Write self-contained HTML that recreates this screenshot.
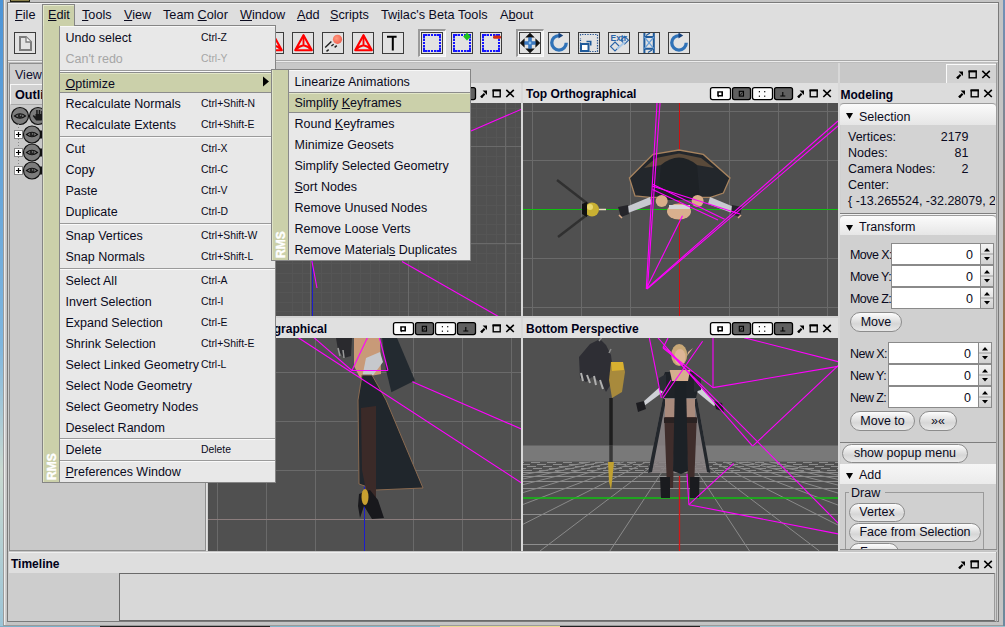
<!DOCTYPE html><html><head><meta charset="utf-8"><style>

*{box-sizing:border-box;margin:0;padding:0}
html,body{width:1005px;height:627px;overflow:hidden}
body{position:relative;font-family:"Liberation Sans",sans-serif;font-size:12.5px;color:#000;background:#6a9cc8}
.ab{position:absolute}
.t{position:absolute;white-space:nowrap;line-height:1}
u{text-decoration:underline;text-decoration-thickness:1px;text-underline-offset:1px}

</style></head><body>
<div class="ab" style="left:0px;top:0px;width:3px;height:627px;background:linear-gradient(#4d94d6,#7fb6de 55%,#c9d9d0 75%,#9cc4d6)"></div>
<div class="ab" style="left:1003px;top:0px;width:2px;height:627px;background:linear-gradient(#7090b8,#a07040 60%,#6a8aa0)"></div>
<div class="ab" style="left:0px;top:626px;width:1005px;height:1px;background:linear-gradient(90deg,#7ab0c8 0 100px,#222 100px 270px,#80b4c8 270px 440px,#e8d890 440px 560px,#222 560px 700px,#9cc0cc 700px 1005px)"></div>
<div class="ab" style="left:3px;top:0px;width:1000px;height:626px;background:#c4c4c4"></div>
<div class="ab" style="left:3px;top:0px;width:1px;height:626px;background:#9c9c9c"></div>
<div class="ab" style="left:4px;top:0px;width:1px;height:625px;background:#ececec"></div>
<div class="ab" style="left:5px;top:0px;width:1px;height:625px;background:#cfcfcf"></div>
<div class="ab" style="left:10px;top:0px;width:20px;height:2px;background:#8a804a;border:1px solid #1e1e10;border-top:none"></div>
<div class="ab" style="left:3px;top:625px;width:1000px;height:1px;background:#9a9a9a"></div>
<div class="ab" style="left:7px;top:2px;width:992px;height:620px;background:#cdcdcd;border:1px solid #7a7a7a"></div>
<div class="ab" style="left:8px;top:3px;width:990px;height:57px;background:#dedede"></div>
<div class="ab" style="left:8px;top:3px;width:990px;height:1px;background:#f2f2f2"></div>
<div class="ab" style="left:8px;top:60px;width:990px;height:1px;background:#a8a8a8"></div>
<div class="ab" style="left:8px;top:61px;width:990px;height:1px;background:#ececec"></div>
<div class="ab" style="left:8px;top:62px;width:990px;height:1px;background:#bdbdbd"></div>
<div class="ab" style="left:42px;top:4px;width:33px;height:22px;background:#cbd0aa;border:1px solid #858585;border-bottom:none"></div>
<div class="ab" style="left:43px;top:5px;width:31px;height:1px;background:#e4e8cc"></div>
<div class="ab" style="left:43px;top:5px;width:1px;height:21px;background:#e4e8cc"></div>
<div class="t" style="left:15px;top:9.02px;font-size:12.7px;color:#0a0a1e;"><u>F</u>ile</div>
<div class="t" style="left:48px;top:9.02px;font-size:12.7px;color:#0a0a1e;"><u>E</u>dit</div>
<div class="t" style="left:82px;top:9.02px;font-size:12.7px;color:#0a0a1e;"><u>T</u>ools</div>
<div class="t" style="left:124px;top:9.02px;font-size:12.7px;color:#0a0a1e;"><u>V</u>iew</div>
<div class="t" style="left:163px;top:9.02px;font-size:12.7px;color:#0a0a1e;">Team <u>C</u>olor</div>
<div class="t" style="left:240px;top:9.02px;font-size:12.7px;color:#0a0a1e;"><u>W</u>indow</div>
<div class="t" style="left:297px;top:9.02px;font-size:12.7px;color:#0a0a1e;"><u>A</u>dd</div>
<div class="t" style="left:330px;top:9.02px;font-size:12.7px;color:#0a0a1e;"><u>S</u>cripts</div>
<div class="t" style="left:381px;top:9.02px;font-size:12.7px;color:#0a0a1e;">Tw<u>i</u>lac's Beta Tools</div>
<div class="t" style="left:500px;top:9.02px;font-size:12.7px;color:#0a0a1e;">A<u>b</u>out</div>
<div class="ab" style="left:14px;top:32px;width:22px;height:22px;border:1px solid #3c3c3c;background:#e2e2e2"></div>
<svg class="ab" style="left:14px;top:32px" width="22" height="22" viewBox="0 0 22 22"><path d="M6 5H12L17 10V18H6Z" fill="none" stroke="#7c7c7c" stroke-width="2"/><path d="M12 5V10H17" fill="#f4f4f4" stroke="#7c7c7c" stroke-width="1.3"/></svg>
<div class="ab" style="left:262px;top:32px;width:22px;height:22px;border:1px solid #3c3c3c;background:#e2e2e2"></div>
<svg class="ab" style="left:262px;top:32px" width="22" height="22" viewBox="0 0 22 22"><path d="M11.5 3.2L3.2 18.2H19.8Z" fill="none" stroke="#f00" stroke-width="2.1" stroke-linejoin="round"/><path d="M11.5 3.5V13.2M3.8 17.6Q7 14 11.5 13.2Q16 14 19.2 17.6" fill="none" stroke="#f00" stroke-width="1.9"/></svg>
<div class="ab" style="left:292px;top:32px;width:22px;height:22px;border:1px solid #3c3c3c;background:#e2e2e2"></div>
<svg class="ab" style="left:292px;top:32px" width="22" height="22" viewBox="0 0 22 22"><path d="M11.5 3.2L3.2 18.2H19.8Z" fill="none" stroke="#f00" stroke-width="2.1" stroke-linejoin="round"/><path d="M11.5 3.5V13.2M3.8 17.6Q7 14 11.5 13.2Q16 14 19.2 17.6" fill="none" stroke="#f00" stroke-width="1.9"/></svg>
<div class="ab" style="left:322px;top:32px;width:22px;height:22px;border:1px solid #3c3c3c;background:#e2e2e2"></div>
<svg class="ab" style="left:322px;top:32px" width="22" height="22" viewBox="0 0 22 22"><defs><radialGradient id="cg" cx="0.4" cy="0.4" r="0.7"><stop offset="0" stop-color="#ff9a80"/><stop offset="1" stop-color="#f05a4a"/></radialGradient></defs><circle cx="15.5" cy="7.3" r="4.6" fill="url(#cg)"/><path d="M3.2 15.4L9.4 9.5M9.4 14L11.7 12.2M12.6 15.4L14.8 13.6M4.5 19.4L6.7 17.6" stroke="#1e1e1e" stroke-width="1.4"/></svg>
<div class="ab" style="left:352px;top:32px;width:22px;height:22px;border:1px solid #3c3c3c;background:#e2e2e2"></div>
<svg class="ab" style="left:352px;top:32px" width="22" height="22" viewBox="0 0 22 22"><path d="M11.5 3.2L3.2 18.2H19.8Z" fill="none" stroke="#f00" stroke-width="2.1" stroke-linejoin="round"/><path d="M11.5 3.5V13.2M3.8 17.6Q7 14 11.5 13.2Q16 14 19.2 17.6" fill="none" stroke="#f00" stroke-width="1.9"/></svg>
<div class="ab" style="left:382px;top:32px;width:22px;height:22px;border:1px solid #3c3c3c;background:#e2e2e2"></div>
<svg class="ab" style="left:382px;top:32px" width="22" height="22" viewBox="0 0 22 22"><path d="M5 4.8H14.6M10.8 4.8V18.6" stroke="#000" stroke-width="2"/></svg>
<div class="ab" style="left:418px;top:29px;width:28px;height:28px;border-top:2px solid #9a9a9a;border-left:2px solid #9a9a9a;border-right:1px solid #fafafa;border-bottom:1px solid #fafafa;background:#f2f2f2"></div>
<div class="ab" style="left:421px;top:32px;width:22px;height:22px;border:1px solid #3c3c3c;background:#e2e2e2"></div>
<svg class="ab" style="left:421px;top:32px" width="22" height="22" viewBox="0 0 22 22"><path d="M3 6.5V3H6.5M15.5 3H19V6.5M19 15.5V19H15.5M6.5 19H3V15.5" fill="none" stroke="#1414ff" stroke-width="2"/><rect x="7" y="2" width="2" height="2" fill="#1414ff"/><rect x="7" y="18" width="2" height="2" fill="#1414ff"/><rect x="2" y="7" width="2" height="2" fill="#1414ff"/><rect x="18" y="7" width="2" height="2" fill="#1414ff"/><rect x="10" y="2" width="2" height="2" fill="#1414ff"/><rect x="10" y="18" width="2" height="2" fill="#1414ff"/><rect x="2" y="10" width="2" height="2" fill="#1414ff"/><rect x="18" y="10" width="2" height="2" fill="#1414ff"/><rect x="13" y="2" width="2" height="2" fill="#1414ff"/><rect x="13" y="18" width="2" height="2" fill="#1414ff"/><rect x="2" y="13" width="2" height="2" fill="#1414ff"/><rect x="18" y="13" width="2" height="2" fill="#1414ff"/></svg>
<div class="ab" style="left:451px;top:32px;width:22px;height:22px;border:1px solid #3c3c3c;background:#e2e2e2"></div>
<svg class="ab" style="left:451px;top:32px" width="22" height="22" viewBox="0 0 22 22"><path d="M3 6.5V3H6.5M15.5 3H19V6.5M19 15.5V19H15.5M6.5 19H3V15.5" fill="none" stroke="#1414ff" stroke-width="2"/><rect x="7" y="2" width="2" height="2" fill="#1414ff"/><rect x="7" y="18" width="2" height="2" fill="#1414ff"/><rect x="2" y="7" width="2" height="2" fill="#1414ff"/><rect x="18" y="7" width="2" height="2" fill="#1414ff"/><rect x="10" y="2" width="2" height="2" fill="#1414ff"/><rect x="10" y="18" width="2" height="2" fill="#1414ff"/><rect x="2" y="10" width="2" height="2" fill="#1414ff"/><rect x="18" y="10" width="2" height="2" fill="#1414ff"/><rect x="13" y="2" width="2" height="2" fill="#1414ff"/><rect x="13" y="18" width="2" height="2" fill="#1414ff"/><rect x="2" y="13" width="2" height="2" fill="#1414ff"/><rect x="18" y="13" width="2" height="2" fill="#1414ff"/><path d="M16 0.8L19.8 4.6L16 8.4L12.2 4.6Z" fill="#1bc41b"/></svg>
<div class="ab" style="left:480px;top:32px;width:22px;height:22px;border:1px solid #3c3c3c;background:#e2e2e2"></div>
<svg class="ab" style="left:480px;top:32px" width="22" height="22" viewBox="0 0 22 22"><path d="M3 6.5V3H6.5M15.5 3H19V6.5M19 15.5V19H15.5M6.5 19H3V15.5" fill="none" stroke="#1414ff" stroke-width="2"/><rect x="7" y="2" width="2" height="2" fill="#1414ff"/><rect x="7" y="18" width="2" height="2" fill="#1414ff"/><rect x="2" y="7" width="2" height="2" fill="#1414ff"/><rect x="18" y="7" width="2" height="2" fill="#1414ff"/><rect x="10" y="2" width="2" height="2" fill="#1414ff"/><rect x="10" y="18" width="2" height="2" fill="#1414ff"/><rect x="2" y="10" width="2" height="2" fill="#1414ff"/><rect x="18" y="10" width="2" height="2" fill="#1414ff"/><rect x="13" y="2" width="2" height="2" fill="#1414ff"/><rect x="13" y="18" width="2" height="2" fill="#1414ff"/><rect x="2" y="13" width="2" height="2" fill="#1414ff"/><rect x="18" y="13" width="2" height="2" fill="#1414ff"/><rect x="13" y="3.4" width="8" height="3.4" rx="1.5" fill="#d42a10"/></svg>
<div class="ab" style="left:516px;top:29px;width:28px;height:28px;border-top:2px solid #9a9a9a;border-left:2px solid #9a9a9a;border-right:1px solid #fafafa;border-bottom:1px solid #fafafa;background:#f2f2f2"></div>
<div class="ab" style="left:519px;top:32px;width:22px;height:22px;border:1px solid #3c3c3c;background:#e2e2e2"></div>
<svg class="ab" style="left:519px;top:32px" width="22" height="22" viewBox="0 0 22 22"><path d="M11 4V18M4 11H18" stroke="#3a78c0" stroke-width="3.2"/><path d="M11 0.8L15.8 5.6H6.2ZM11 21.2L15.8 16.4H6.2ZM0.8 11L5.6 6.2V15.8ZM21.2 11L16.4 6.2V15.8Z" fill="#111"/><path d="M11 5.6V16.4M5.6 11H16.4" stroke="#3a78c0" stroke-width="3"/><circle cx="11" cy="11" r="1.4" fill="#8cc0ec"/></svg>
<div class="ab" style="left:548px;top:32px;width:22px;height:22px;border:1px solid #3c3c3c;background:#e2e2e2"></div>
<svg class="ab" style="left:548px;top:32px" width="22" height="22" viewBox="0 0 22 22"><path d="M11 3.55A7.25 7.25 0 1 0 18.25 10.8" fill="none" stroke="#2f72b8" stroke-width="3.3"/><path d="M10.5 0.6L15.2 3.6L10.5 6.6Z" fill="#143f7a"/></svg>
<div class="ab" style="left:578px;top:32px;width:22px;height:22px;border:1px solid #3c3c3c;background:#e2e2e2"></div>
<svg class="ab" style="left:578px;top:32px" width="22" height="22" viewBox="0 0 22 22"><path d="M2.5 3.5V2.5H19.5V19.5H2.5V6" fill="none" stroke="#1f4f8f" stroke-width="1.2" stroke-dasharray="1.3 1.3"/><rect x="3" y="12" width="7.5" height="7" fill="#fff" stroke="#1f5a9a" stroke-width="2"/><path d="M8.5 9.5H12.7V13.5" fill="none" stroke="#1f5a9a" stroke-width="1.6"/></svg>
<div class="ab" style="left:608px;top:32px;width:22px;height:22px;border:1px solid #3c3c3c;background:#e2e2e2"></div>
<svg class="ab" style="left:608px;top:32px" width="22" height="22" viewBox="0 0 22 22"><text x="2.5" y="8.8" font-size="8.6" font-family="Liberation Sans" fill="#2a64a8" font-weight="bold" textLength="16.5" lengthAdjust="spacingAndGlyphs">Extr</text><path d="M7 10L11.5 14.5L7 19L2.5 14.5ZM16.7 4.3L20.5 8.2L16.7 12L12.9 8.2Z" fill="none" stroke="#2a64a8" stroke-width="1.1"/><path d="M9 17L17 10" stroke="#a8c8e8" stroke-width="2"/></svg>
<div class="ab" style="left:638px;top:32px;width:22px;height:22px;border:1px solid #3c3c3c;background:#e2e2e2"></div>
<svg class="ab" style="left:638px;top:32px" width="22" height="22" viewBox="0 0 22 22"><path d="M6.4 1V21M15.8 1V21M6.4 5H15.8M6.4 16.7H15.8" fill="none" stroke="#1f5a9a" stroke-width="2"/><path d="M6.4 5L15.8 16.7M15.8 5L6.4 16.7" stroke="#6aa0d8" stroke-width="1.2"/><path d="M8 3.5L12 1M10 20.5L14 18" stroke="#1f5a9a" stroke-width="1.2"/></svg>
<div class="ab" style="left:668px;top:32px;width:22px;height:22px;border:1px solid #3c3c3c;background:#e2e2e2"></div>
<svg class="ab" style="left:668px;top:32px" width="22" height="22" viewBox="0 0 22 22"><path d="M11 3.55A7.25 7.25 0 1 0 18.25 10.8" fill="none" stroke="#2f72b8" stroke-width="3.3"/><path d="M10.5 0.6L15.2 3.6L10.5 6.6Z" fill="#143f7a"/></svg>
<div class="ab" style="left:8px;top:63px;width:990px;height:20px;background:#c8c8c8"></div>
<div class="ab" style="left:9px;top:63px;width:197px;height:488px;background:#c9c9c9;border:1px solid #8e8e8e"></div>
<div class="ab" style="left:10px;top:64px;width:60px;height:20px;background:#cfcfcf;border-right:1px solid #9a9a9a"></div>
<div class="t" style="left:15px;top:68.88px;font-size:12.5px;color:#101030;">View</div>
<div class="ab" style="left:10px;top:84px;width:195px;height:21px;background:#d2d2d2;border-top:1px solid #f6f6f6;border-left:1px solid #f6f6f6;border-bottom:1px solid #a8a8a8"></div>
<div class="t" style="left:15px;top:88.72px;font-size:12.7px;font-weight:bold;color:#000018;">Outliner</div>
<svg class="ab" style="left:0;top:0" width="60" height="200"><circle cx="20" cy="116" r="8.5" fill="#7c7c7c" stroke="#111" stroke-width="1.2"/><path d="M14.5 116q5.5 -4.5 11 0q-5.5 4.5 -11 0z" fill="none" stroke="#111" stroke-width="1.1"/><circle cx="20" cy="116" r="2.3" fill="#222"/><circle cx="20.6" cy="115.4" r="0.8" fill="#777"/><circle cx="38" cy="116" r="8.5" fill="#7c7c7c" stroke="#111" stroke-width="1.2"/><path d="M35.5 111.5v5l-1.8-1.5l-1 1l3.5 4.5h5.5l1-2v-7.5h-1.5v3h-1v-4h-1.5v4h-1v-4h-1.5v4h-0.7v-2.5z" fill="#1a1a1a"/><path d="M18.5 124v46" stroke="#888" stroke-width="1" stroke-dasharray="1 2"/><rect x="14.5" y="130.5" width="8" height="8" fill="#fff" stroke="#888" stroke-width="1"/><path d="M16 134.5h5M18.5 132.0v5" stroke="#000" stroke-width="1.2"/><circle cx="32" cy="134.5" r="8.5" fill="#7c7c7c" stroke="#111" stroke-width="1.2"/><path d="M26.5 134.5q5.5 -4.5 11 0q-5.5 4.5 -11 0z" fill="none" stroke="#111" stroke-width="1.1"/><circle cx="32" cy="134.5" r="2.3" fill="#222"/><circle cx="32.6" cy="133.9" r="0.8" fill="#777"/><rect x="40" y="130.5" width="3" height="8" fill="#111"/><rect x="14.5" y="148.5" width="8" height="8" fill="#fff" stroke="#888" stroke-width="1"/><path d="M16 152.5h5M18.5 150.0v5" stroke="#000" stroke-width="1.2"/><circle cx="32" cy="152.5" r="8.5" fill="#7c7c7c" stroke="#111" stroke-width="1.2"/><path d="M26.5 152.5q5.5 -4.5 11 0q-5.5 4.5 -11 0z" fill="none" stroke="#111" stroke-width="1.1"/><circle cx="32" cy="152.5" r="2.3" fill="#222"/><circle cx="32.6" cy="151.9" r="0.8" fill="#777"/><rect x="40" y="148.5" width="3" height="8" fill="#111"/><rect x="14.5" y="166.5" width="8" height="8" fill="#fff" stroke="#888" stroke-width="1"/><path d="M16 170.5h5M18.5 168.0v5" stroke="#000" stroke-width="1.2"/><circle cx="32" cy="170.5" r="8.5" fill="#7c7c7c" stroke="#111" stroke-width="1.2"/><path d="M26.5 170.5q5.5 -4.5 11 0q-5.5 4.5 -11 0z" fill="none" stroke="#111" stroke-width="1.1"/><circle cx="32" cy="170.5" r="2.3" fill="#222"/><circle cx="32.6" cy="169.9" r="0.8" fill="#777"/><rect x="40" y="166.5" width="3" height="8" fill="#111"/></svg>
<div class="ab" style="left:206px;top:63px;width:1px;height:488px;background:#e2e2e2"></div>
<div class="ab" style="left:207px;top:63px;width:1px;height:488px;background:#d2d2d2"></div>
<div class="ab" style="left:208px;top:103px;width:313px;height:213px;background:#505050"></div>
<div class="ab" style="left:523px;top:103px;width:315px;height:213px;background:#505050"></div>
<div class="ab" style="left:208px;top:338px;width:313px;height:213px;background:#505050"></div>
<div class="ab" style="left:523px;top:338px;width:315px;height:213px;background:#505050"></div>
<svg class="ab" style="left:208px;top:103px" width="313" height="213" viewBox="208 103 313 213"><line x1="292.5" y1="103" x2="292.5" y2="316" stroke="#555555" stroke-width="1"/><line x1="302.5" y1="103" x2="302.5" y2="316" stroke="#555555" stroke-width="1"/><line x1="312.5" y1="103" x2="312.5" y2="316" stroke="#555555" stroke-width="1"/><line x1="321.5" y1="103" x2="321.5" y2="316" stroke="#555555" stroke-width="1"/><line x1="331.5" y1="103" x2="331.5" y2="316" stroke="#555555" stroke-width="1"/><line x1="341.5" y1="103" x2="341.5" y2="316" stroke="#555555" stroke-width="1"/><line x1="350.5" y1="103" x2="350.5" y2="316" stroke="#555555" stroke-width="1"/><line x1="360.5" y1="103" x2="360.5" y2="316" stroke="#555555" stroke-width="1"/><line x1="370.5" y1="103" x2="370.5" y2="316" stroke="#555555" stroke-width="1"/><line x1="379.5" y1="103" x2="379.5" y2="316" stroke="#555555" stroke-width="1"/><line x1="389.5" y1="103" x2="389.5" y2="316" stroke="#555555" stroke-width="1"/><line x1="399.5" y1="103" x2="399.5" y2="316" stroke="#555555" stroke-width="1"/><line x1="408.5" y1="103" x2="408.5" y2="316" stroke="#555555" stroke-width="1"/><line x1="418.5" y1="103" x2="418.5" y2="316" stroke="#555555" stroke-width="1"/><line x1="428.5" y1="103" x2="428.5" y2="316" stroke="#555555" stroke-width="1"/><line x1="438.5" y1="103" x2="438.5" y2="316" stroke="#555555" stroke-width="1"/><line x1="447.5" y1="103" x2="447.5" y2="316" stroke="#555555" stroke-width="1"/><line x1="457.5" y1="103" x2="457.5" y2="316" stroke="#555555" stroke-width="1"/><line x1="467.5" y1="103" x2="467.5" y2="316" stroke="#555555" stroke-width="1"/><line x1="476.5" y1="103" x2="476.5" y2="316" stroke="#555555" stroke-width="1"/><line x1="486.5" y1="103" x2="486.5" y2="316" stroke="#555555" stroke-width="1"/><line x1="496.5" y1="103" x2="496.5" y2="316" stroke="#555555" stroke-width="1"/><line x1="506.5" y1="103" x2="506.5" y2="316" stroke="#555555" stroke-width="1"/><line x1="515.5" y1="103" x2="515.5" y2="316" stroke="#555555" stroke-width="1"/><line x1="208" y1="108.5" x2="521" y2="108.5" stroke="#555555" stroke-width="1"/><line x1="208" y1="117.5" x2="521" y2="117.5" stroke="#555555" stroke-width="1"/><line x1="208" y1="127.5" x2="521" y2="127.5" stroke="#555555" stroke-width="1"/><line x1="208" y1="137.5" x2="521" y2="137.5" stroke="#555555" stroke-width="1"/><line x1="208" y1="146.5" x2="521" y2="146.5" stroke="#555555" stroke-width="1"/><line x1="208" y1="156.5" x2="521" y2="156.5" stroke="#555555" stroke-width="1"/><line x1="208" y1="166.5" x2="521" y2="166.5" stroke="#555555" stroke-width="1"/><line x1="208" y1="176.5" x2="521" y2="176.5" stroke="#555555" stroke-width="1"/><line x1="208" y1="185.5" x2="521" y2="185.5" stroke="#555555" stroke-width="1"/><line x1="208" y1="195.5" x2="521" y2="195.5" stroke="#555555" stroke-width="1"/><line x1="208" y1="205.5" x2="521" y2="205.5" stroke="#555555" stroke-width="1"/><line x1="208" y1="214.5" x2="521" y2="214.5" stroke="#555555" stroke-width="1"/><line x1="208" y1="224.5" x2="521" y2="224.5" stroke="#555555" stroke-width="1"/><line x1="208" y1="234.5" x2="521" y2="234.5" stroke="#555555" stroke-width="1"/><line x1="208" y1="244.5" x2="521" y2="244.5" stroke="#555555" stroke-width="1"/><line x1="208" y1="253.5" x2="521" y2="253.5" stroke="#555555" stroke-width="1"/><line x1="208" y1="263.5" x2="521" y2="263.5" stroke="#555555" stroke-width="1"/><line x1="208" y1="273.5" x2="521" y2="273.5" stroke="#555555" stroke-width="1"/><line x1="208" y1="282.5" x2="521" y2="282.5" stroke="#555555" stroke-width="1"/><line x1="208" y1="292.5" x2="521" y2="292.5" stroke="#555555" stroke-width="1"/><line x1="208" y1="302.5" x2="521" y2="302.5" stroke="#555555" stroke-width="1"/><line x1="208" y1="311.5" x2="521" y2="311.5" stroke="#555555" stroke-width="1"/><line x1="213.5" y1="103" x2="213.5" y2="316" stroke="#6a6a6a" stroke-width="1"/><line x1="310.5" y1="103" x2="310.5" y2="316" stroke="#6a6a6a" stroke-width="1"/><line x1="408.5" y1="103" x2="408.5" y2="316" stroke="#6a6a6a" stroke-width="1"/><line x1="505.5" y1="103" x2="505.5" y2="316" stroke="#6a6a6a" stroke-width="1"/><line x1="208" y1="146.5" x2="521" y2="146.5" stroke="#6a6a6a" stroke-width="1"/><line x1="208" y1="243.5" x2="521" y2="243.5" stroke="#6a6a6a" stroke-width="1"/><line x1="312.5" y1="103" x2="312.5" y2="316" stroke="#1c1ccc" stroke-width="1"/><line x1="471" y1="131" x2="521" y2="109.4" stroke="#ff00ff" stroke-width="1.1"/><line x1="402" y1="261.4" x2="498.4" y2="316.5" stroke="#ff00ff" stroke-width="1.1"/><line x1="311.9" y1="261" x2="317" y2="288" stroke="#ff00ff" stroke-width="1.1"/></svg>
<svg class="ab" style="left:523px;top:103px" width="315" height="213" viewBox="523 103 315 213"><line x1="532.5" y1="103" x2="532.5" y2="316" stroke="#6a6a6a" stroke-width="1"/><line x1="581.5" y1="103" x2="581.5" y2="316" stroke="#6a6a6a" stroke-width="1"/><line x1="630.5" y1="103" x2="630.5" y2="316" stroke="#6a6a6a" stroke-width="1"/><line x1="729.5" y1="103" x2="729.5" y2="316" stroke="#6a6a6a" stroke-width="1"/><line x1="778.5" y1="103" x2="778.5" y2="316" stroke="#6a6a6a" stroke-width="1"/><line x1="827.5" y1="103" x2="827.5" y2="316" stroke="#6a6a6a" stroke-width="1"/><line x1="523" y1="111.5" x2="838" y2="111.5" stroke="#6a6a6a" stroke-width="1"/><line x1="523" y1="160.5" x2="838" y2="160.5" stroke="#6a6a6a" stroke-width="1"/><line x1="523" y1="258.5" x2="838" y2="258.5" stroke="#6a6a6a" stroke-width="1"/><line x1="523" y1="307.5" x2="838" y2="307.5" stroke="#6a6a6a" stroke-width="1"/><line x1="679.5" y1="103" x2="679.5" y2="316" stroke="#cc1010" stroke-width="1"/><line x1="523" y1="209.5" x2="838" y2="209.5" stroke="#10c010" stroke-width="1"/><path d="M653 154.4 L679 150 L703.3 154.4 L730 178 L723.4 193 L710.5 197.4 L650 197.4 L635 196 L629.4 178 Z" fill="#23272c" stroke="#a8845f" stroke-width="1.3"/><path d="M656 158 L679 153.5 L701 158 L714 168 L679 162 L644 168 Z" fill="#5a4a3a"/><path d="M661 165 Q679 150 697 165 L700 200 L658 200 Z" fill="#1e2226"/><path d="M650 197 L626 207 L628 213 L652 204 Z" fill="#c8cad0"/><path d="M710 197 L734 207 L732 213 L708 204 Z" fill="#c8cad0"/><path d="M618 207 L628 205 L629 214 L621 217 Z M732 205 L742 207 L740 217 L731 214 Z" fill="#25252a"/><path d="M619 215 L622 218 M741 215 L738 218" stroke="#d7aa88" stroke-width="1.5"/><ellipse cx="661.7" cy="201" rx="6" ry="6" fill="#d8ae8a"/><ellipse cx="697.6" cy="201" rx="6" ry="6" fill="#d8ae8a"/><ellipse cx="679" cy="211.5" rx="12" ry="8" fill="#d9b08e"/><path d="M669 207 L690 207" stroke="#d6d6d6" stroke-width="4"/><line x1="557" y1="180" x2="588" y2="204" stroke="#303030" stroke-width="2.5"/><line x1="558" y1="237" x2="588" y2="214" stroke="#303030" stroke-width="2.5"/><circle cx="592" cy="209.5" r="7" fill="#c8b032"/><circle cx="590" cy="207" r="3" fill="#e8d870"/><path d="M582 204 L587 202 L587 217 L582 214 Z" fill="#111"/><line x1="599" y1="209.5" x2="606" y2="209.5" stroke="#e8e0c0" stroke-width="1.5"/><line x1="657" y1="103" x2="646.3" y2="288.8" stroke="#ff00ff" stroke-width="1.1"/><line x1="660" y1="103" x2="647.5" y2="288" stroke="#ff00ff" stroke-width="1.1"/><line x1="646.3" y1="288.8" x2="838" y2="121" stroke="#ff00ff" stroke-width="1.1"/><line x1="647" y1="289" x2="838" y2="126" stroke="#ff00ff" stroke-width="1.1"/><line x1="646.3" y1="288.8" x2="682.5" y2="215.8" stroke="#ff00ff" stroke-width="1.1"/><line x1="652.6" y1="184.2" x2="724.6" y2="219.3" stroke="#ff00ff" stroke-width="1.1"/><line x1="652.6" y1="189.5" x2="718" y2="220" stroke="#ff00ff" stroke-width="1.1"/><line x1="652" y1="186" x2="740" y2="214" stroke="#ff00ff" stroke-width="1.1"/></svg>
<svg class="ab" style="left:208px;top:338px" width="313" height="213" viewBox="208 338 313 213"><line x1="217.5" y1="338" x2="217.5" y2="551" stroke="#6a6a6a" stroke-width="1"/><line x1="266.5" y1="338" x2="266.5" y2="551" stroke="#6a6a6a" stroke-width="1"/><line x1="315.5" y1="338" x2="315.5" y2="551" stroke="#6a6a6a" stroke-width="1"/><line x1="413.5" y1="338" x2="413.5" y2="551" stroke="#6a6a6a" stroke-width="1"/><line x1="462.5" y1="338" x2="462.5" y2="551" stroke="#6a6a6a" stroke-width="1"/><line x1="511.5" y1="338" x2="511.5" y2="551" stroke="#6a6a6a" stroke-width="1"/><line x1="208" y1="372.5" x2="521" y2="372.5" stroke="#6a6a6a" stroke-width="1"/><line x1="208" y1="421.5" x2="521" y2="421.5" stroke="#6a6a6a" stroke-width="1"/><line x1="208" y1="470.5" x2="521" y2="470.5" stroke="#6a6a6a" stroke-width="1"/><line x1="208" y1="519.5" x2="521" y2="519.5" stroke="#8a7c7c" stroke-width="1"/><line x1="364.5" y1="338" x2="364.5" y2="551" stroke="#1c1ccc" stroke-width="1"/><path d="M336 338 L352 338 L351 356 L344 358 L338 350 Z" fill="#2a2a2e"/><path d="M338 348 L340 356 M343 350 L344 358" stroke="#9a9a9a" stroke-width="1.5"/><path d="M382 337 L396.6 337 L415 380.5 L391.4 392.2 L386 370 Z" fill="#232a30"/><path d="M354 338 L380 338 L381 374 L360 378 L354 366 Z" fill="#c89a78"/><path d="M366 358 L380 352 L383 362 L368 382 L362 378 Z" fill="#c6c8cc"/><path d="M362 375 L372 375 L386 400 L423 488 L376 490 L359 484 L358 400 Z" fill="#20262c" stroke="#8a6a50" stroke-width="1"/><path d="M361 408 L376 406 L376 498 L368 500 L362 470 Z" fill="#3b2a28"/><path d="M359 494 L370 490 L378 500 L384 518 L372 519 L364 506 L360 518 L358 506 Z" fill="#18181c"/><ellipse cx="365" cy="497" rx="3.5" ry="8" fill="#c8a030"/><line x1="314" y1="337.7" x2="351.9" y2="370.5" stroke="#ff00ff" stroke-width="1.1"/><line x1="351.9" y1="370.5" x2="388" y2="370.5" stroke="#ff00ff" stroke-width="1.1"/><line x1="351.9" y1="370.5" x2="367.4" y2="337.7" stroke="#ff00ff" stroke-width="1.1"/><line x1="388" y1="370.5" x2="379.4" y2="337.7" stroke="#ff00ff" stroke-width="1.1"/><line x1="298.4" y1="337.7" x2="521.4" y2="482.8" stroke="#ff00ff" stroke-width="1.1"/><line x1="412.3" y1="381.8" x2="521.4" y2="429" stroke="#ff00ff" stroke-width="1.1"/></svg>
<svg class="ab" style="left:523px;top:338px" width="315" height="213" viewBox="523 338 315 213"><rect x="523" y="445.5" width="315" height="16" fill="#797979"/><line x1="523" y1="462.5" x2="838" y2="462.5" stroke="#8c8c8c" stroke-width="1" stroke-dasharray="9 7" stroke-dashoffset="8"/><line x1="523" y1="464.5" x2="838" y2="464.5" stroke="#8c8c8c" stroke-width="1" stroke-dasharray="9 7" stroke-dashoffset="2"/><line x1="523" y1="466.5" x2="838" y2="466.5" stroke="#8c8c8c" stroke-width="1" stroke-dasharray="9 7" stroke-dashoffset="12"/><line x1="523" y1="468.5" x2="838" y2="468.5" stroke="#8c8c8c" stroke-width="1" stroke-dasharray="9 7" stroke-dashoffset="6"/><line x1="523" y1="470.5" x2="838" y2="470.5" stroke="#8c8c8c" stroke-width="1" stroke-dasharray="9 7" stroke-dashoffset="0"/><line x1="523" y1="472.5" x2="838" y2="472.5" stroke="#8e8e8e" stroke-width="1"/><line x1="523" y1="476.5" x2="838" y2="476.5" stroke="#8e8e8e" stroke-width="1"/><line x1="523" y1="481.5" x2="838" y2="481.5" stroke="#8e8e8e" stroke-width="1"/><line x1="523" y1="488.5" x2="838" y2="488.5" stroke="#8e8e8e" stroke-width="1"/><line x1="523" y1="514.5" x2="838" y2="514.5" stroke="#8e8e8e" stroke-width="1"/><line x1="523" y1="544.5" x2="838" y2="544.5" stroke="#8e8e8e" stroke-width="1"/><line x1="590.1" y1="462" x2="121.1" y2="551" stroke="#8a8a8a" stroke-width="1"/><line x1="601.3" y1="462" x2="190.9" y2="551" stroke="#8a8a8a" stroke-width="1"/><line x1="612.5" y1="462" x2="260.7" y2="551" stroke="#8a8a8a" stroke-width="1"/><line x1="623.7" y1="462" x2="330.6" y2="551" stroke="#8a8a8a" stroke-width="1"/><line x1="634.9" y1="462" x2="400.4" y2="551" stroke="#8a8a8a" stroke-width="1"/><line x1="646.1" y1="462" x2="470.2" y2="551" stroke="#8a8a8a" stroke-width="1"/><line x1="657.3" y1="462" x2="540.0" y2="551" stroke="#8a8a8a" stroke-width="1"/><line x1="668.5" y1="462" x2="609.9" y2="551" stroke="#8a8a8a" stroke-width="1"/><line x1="690.9" y1="462" x2="749.5" y2="551" stroke="#8a8a8a" stroke-width="1"/><line x1="702.1" y1="462" x2="819.4" y2="551" stroke="#8a8a8a" stroke-width="1"/><line x1="713.3" y1="462" x2="889.2" y2="551" stroke="#8a8a8a" stroke-width="1"/><line x1="724.5" y1="462" x2="959.0" y2="551" stroke="#8a8a8a" stroke-width="1"/><line x1="735.7" y1="462" x2="1028.8" y2="551" stroke="#8a8a8a" stroke-width="1"/><line x1="746.9" y1="462" x2="1098.7" y2="551" stroke="#8a8a8a" stroke-width="1"/><line x1="758.1" y1="462" x2="1168.5" y2="551" stroke="#8a8a8a" stroke-width="1"/><line x1="769.3" y1="462" x2="1238.3" y2="551" stroke="#8a8a8a" stroke-width="1"/><line x1="523" y1="498" x2="838" y2="498" stroke="#10c010" stroke-width="1.3"/><line x1="679.5" y1="476" x2="679.5" y2="551" stroke="#d01818" stroke-width="1.3"/><path d="M579 357 L590 344 L600 339 L606 345 L611 355 L614 379 L606 392 L602 384 L597 380 L592 377 L586 382 L580 378 Z" fill="#2e2e34"/><path d="M599 341 L602 337 M609 353 L611 349" stroke="#8a8a8a" stroke-width="1.5"/><path d="M581 373 L583 381 M587 375 L590 383 M594 376 L596 385 M600 380 L603 389" stroke="#b0b0b0" stroke-width="2"/><path d="M611 362 L623 362 L625 372 L622 392 L612 398 L609 380 Z" fill="#a88a3c"/><path d="M611 362 L623 362 L624 370 L612 371 Z" fill="#d8b030"/><line x1="611" y1="398" x2="611" y2="445" stroke="#1e1e1e" stroke-width="3.5"/><line x1="611" y1="445" x2="611" y2="466" stroke="#383838" stroke-width="3.5"/><path d="M608 462 L614 462 L612 482 L611 490 L609 482 Z" fill="#c0a030"/><path d="M648 473 L663 398 L697 398 L710.4 473 Z" fill="#8a8284" opacity="0.85"/><path d="M648 473 L663 398 L666 400 L652 472 Z M710.4 473 L697 398 L694 400 L707 472 Z" fill="#23272c"/><path d="M665 399 L675 399 L675 417 L665 417 Z M686 399 L695 399 L695 417 L686 417 Z" fill="#a88a7c"/><path d="M661 386 L641 403.7 L644 406 L663 392 Z" fill="#cfd1d6"/><path d="M699 386 L717 403.7 L714 406 L697 392 Z" fill="#cfd1d6"/><path d="M636 403 L644 401 L646 409 L638 412 Z M714 401 L722 403 L724 412 L716 409 Z" fill="#1c1c20"/><path d="M665 372 L695 372 L699 384 L696 398 L664 398 L661 384 Z" fill="#1f2328"/><path d="M659 378 L666 374 L666 392 L659 390 Z M701 378 L694 374 L694 392 L701 390 Z" fill="#2a2e34"/><path d="M664.3 417 L675 417 L673 488 L667 488 Z M686 417 L696.8 417 L694 488 L688 488 Z" fill="#3f2d2b"/><path d="M664 418 L675 418 L675 423 L664 423 Z M686 418 L697 418 L697 423 L686 423 Z" fill="#2a2222"/><path d="M675 382 L686 382 L688 471 L681 474 L673 471 Z" fill="#1c2126"/><path d="M660 477 L670 477 L670 498 L661 498 Z M690 477 L699.5 477 L699 498 L690 498 Z" fill="#1a1b1f"/><path d="M669.7 370 L690 370 L688 381 L672 381 Z" fill="#d6ae8e"/><ellipse cx="679.2" cy="355" rx="8" ry="11" fill="#c9a877"/><ellipse cx="680" cy="357" rx="5.5" ry="8" fill="#ddb596"/><path d="M671 352 L666 348 L672 356 Z M688 352 L693 348 L687 356 Z" fill="#d8b090"/><line x1="649.3" y1="337.7" x2="661.3" y2="398" stroke="#ff00ff" stroke-width="1.1"/><line x1="657.9" y1="337.7" x2="752.6" y2="446.2" stroke="#ff00ff" stroke-width="1.1"/><line x1="752.6" y1="446.2" x2="838.6" y2="365.3" stroke="#ff00ff" stroke-width="1.1"/><line x1="713" y1="387.6" x2="838.6" y2="366.3" stroke="#ff00ff" stroke-width="1.1"/><line x1="713" y1="337.7" x2="713" y2="387.6" stroke="#ff00ff" stroke-width="1.1"/><line x1="663" y1="348" x2="713" y2="387.6" stroke="#ff00ff" stroke-width="1.1"/><line x1="744" y1="337.7" x2="838.6" y2="361.8" stroke="#ff00ff" stroke-width="1.1"/><line x1="663" y1="346.3" x2="838.6" y2="523.6" stroke="#ff00ff" stroke-width="1.1"/><line x1="688.9" y1="504.7" x2="838.6" y2="534" stroke="#ff00ff" stroke-width="1.1"/><line x1="688.9" y1="504.7" x2="733.6" y2="463.4" stroke="#ff00ff" stroke-width="1.1"/><line x1="688.9" y1="504.7" x2="687" y2="473.7" stroke="#ff00ff" stroke-width="1.1"/><line x1="663" y1="398" x2="702.6" y2="341.2" stroke="#ff00ff" stroke-width="1.1"/><line x1="668" y1="338" x2="663" y2="348" stroke="#ff00ff" stroke-width="1.1"/><line x1="662" y1="395" x2="671" y2="380" stroke="#ff00ff" stroke-width="1.1"/></svg>
<div class="ab" style="left:208px;top:83px;width:313px;height:20px;background:#e0e0e0"></div>
<div class="t" style="left:211px;top:88.46px;font-size:12px;font-weight:bold;color:#000018;">Front Orthographical</div>
<svg class="ab" style="left:390px;top:83px" width="130" height="20"><rect x="3.5" y="4.6" width="20" height="12" rx="2" fill="#fdfdfd" stroke="#000" stroke-width="1.3"/><rect x="25.5" y="4.6" width="18" height="12" rx="2" fill="#606060" stroke="#000" stroke-width="1.3"/><rect x="45.5" y="4.6" width="20" height="12" rx="2" fill="#fdfdfd" stroke="#000" stroke-width="1.3"/><rect x="67.5" y="4.6" width="18" height="12" rx="2" fill="#606060" stroke="#000" stroke-width="1.3"/><path d="M10.2 8.2H16V13.5H12L11 14.6V13.5H10.2Z" fill="#000"/><rect x="11.8" y="9.6" width="2.6" height="2.4" fill="#fff"/><rect x="32.3" y="8.3" width="4.2" height="4.8" fill="none" stroke="#000" stroke-width="1.1"/><path d="M33 12.5L35.5 9.5" stroke="#000" stroke-width="0.8"/><rect x="51.8" y="8.1" width="1.2" height="1.2" fill="#000"/><rect x="57.1" y="8.1" width="1.2" height="1.2" fill="#000"/><rect x="51.8" y="12.6" width="1.2" height="1.2" fill="#000"/><rect x="57.1" y="12.6" width="1.2" height="1.2" fill="#000"/><path d="M73.3 13H78.3M75.8 9V13" stroke="#000" stroke-width="1.1"/></svg>
<svg class="ab" style="left:480px;top:89.3px" width="40" height="12" viewBox="0 0 40 12"><path d="M1.2 8.2L4.6 4.8" stroke="#000" stroke-width="2.2"/><path d="M2.6 1.6H7V6Z" fill="#000"/><circle cx="1.8" cy="7.6" r="1.2" fill="#000"/><rect x="13.2" y="1" width="7" height="6.8" fill="none" stroke="#000" stroke-width="1.4"/><path d="M12.5 1.6H21" stroke="#000" stroke-width="1.6"/><path d="M26.3 0.8L33.8 8M33.8 0.8L26.3 8" stroke="#000" stroke-width="1.6"/></svg>
<div class="ab" style="left:523px;top:83px;width:315px;height:20px;background:#e0e0e0"></div>
<div class="t" style="left:526px;top:88.46px;font-size:12px;font-weight:bold;color:#000018;">Top Orthographical</div>
<svg class="ab" style="left:707px;top:83px" width="130" height="20"><rect x="3.5" y="4.6" width="20" height="12" rx="2" fill="#fdfdfd" stroke="#000" stroke-width="1.3"/><rect x="25.5" y="4.6" width="18" height="12" rx="2" fill="#606060" stroke="#000" stroke-width="1.3"/><rect x="45.5" y="4.6" width="20" height="12" rx="2" fill="#fdfdfd" stroke="#000" stroke-width="1.3"/><rect x="67.5" y="4.6" width="18" height="12" rx="2" fill="#606060" stroke="#000" stroke-width="1.3"/><path d="M10.2 8.2H16V13.5H12L11 14.6V13.5H10.2Z" fill="#000"/><rect x="11.8" y="9.6" width="2.6" height="2.4" fill="#fff"/><rect x="32.3" y="8.3" width="4.2" height="4.8" fill="none" stroke="#000" stroke-width="1.1"/><path d="M33 12.5L35.5 9.5" stroke="#000" stroke-width="0.8"/><rect x="51.8" y="8.1" width="1.2" height="1.2" fill="#000"/><rect x="57.1" y="8.1" width="1.2" height="1.2" fill="#000"/><rect x="51.8" y="12.6" width="1.2" height="1.2" fill="#000"/><rect x="57.1" y="12.6" width="1.2" height="1.2" fill="#000"/><path d="M73.3 13H78.3M75.8 9V13" stroke="#000" stroke-width="1.1"/></svg>
<svg class="ab" style="left:797px;top:89.3px" width="40" height="12" viewBox="0 0 40 12"><path d="M1.2 8.2L4.6 4.8" stroke="#000" stroke-width="2.2"/><path d="M2.6 1.6H7V6Z" fill="#000"/><circle cx="1.8" cy="7.6" r="1.2" fill="#000"/><rect x="13.2" y="1" width="7" height="6.8" fill="none" stroke="#000" stroke-width="1.4"/><path d="M12.5 1.6H21" stroke="#000" stroke-width="1.6"/><path d="M26.3 0.8L33.8 8M33.8 0.8L26.3 8" stroke="#000" stroke-width="1.6"/></svg>
<div class="ab" style="left:208px;top:318px;width:313px;height:20px;background:#e0e0e0"></div>
<div class="t" style="left:212.4px;top:323.46px;font-size:12px;font-weight:bold;color:#000018;">Side Orthographical</div>
<svg class="ab" style="left:390px;top:318px" width="130" height="20"><rect x="3.5" y="4.6" width="20" height="12" rx="2" fill="#fdfdfd" stroke="#000" stroke-width="1.3"/><rect x="25.5" y="4.6" width="18" height="12" rx="2" fill="#606060" stroke="#000" stroke-width="1.3"/><rect x="45.5" y="4.6" width="20" height="12" rx="2" fill="#fdfdfd" stroke="#000" stroke-width="1.3"/><rect x="67.5" y="4.6" width="18" height="12" rx="2" fill="#606060" stroke="#000" stroke-width="1.3"/><path d="M10.2 8.2H16V13.5H12L11 14.6V13.5H10.2Z" fill="#000"/><rect x="11.8" y="9.6" width="2.6" height="2.4" fill="#fff"/><rect x="32.3" y="8.3" width="4.2" height="4.8" fill="none" stroke="#000" stroke-width="1.1"/><path d="M33 12.5L35.5 9.5" stroke="#000" stroke-width="0.8"/><rect x="51.8" y="8.1" width="1.2" height="1.2" fill="#000"/><rect x="57.1" y="8.1" width="1.2" height="1.2" fill="#000"/><rect x="51.8" y="12.6" width="1.2" height="1.2" fill="#000"/><rect x="57.1" y="12.6" width="1.2" height="1.2" fill="#000"/><path d="M73.3 13H78.3M75.8 9V13" stroke="#000" stroke-width="1.1"/></svg>
<svg class="ab" style="left:480px;top:324.3px" width="40" height="12" viewBox="0 0 40 12"><path d="M1.2 8.2L4.6 4.8" stroke="#000" stroke-width="2.2"/><path d="M2.6 1.6H7V6Z" fill="#000"/><circle cx="1.8" cy="7.6" r="1.2" fill="#000"/><rect x="13.2" y="1" width="7" height="6.8" fill="none" stroke="#000" stroke-width="1.4"/><path d="M12.5 1.6H21" stroke="#000" stroke-width="1.6"/><path d="M26.3 0.8L33.8 8M33.8 0.8L26.3 8" stroke="#000" stroke-width="1.6"/></svg>
<div class="ab" style="left:523px;top:318px;width:315px;height:20px;background:#e0e0e0"></div>
<div class="t" style="left:526px;top:323.46px;font-size:12px;font-weight:bold;color:#000018;">Bottom Perspective</div>
<svg class="ab" style="left:707px;top:318px" width="130" height="20"><rect x="3.5" y="4.6" width="20" height="12" rx="2" fill="#fdfdfd" stroke="#000" stroke-width="1.3"/><rect x="25.5" y="4.6" width="18" height="12" rx="2" fill="#606060" stroke="#000" stroke-width="1.3"/><rect x="45.5" y="4.6" width="20" height="12" rx="2" fill="#fdfdfd" stroke="#000" stroke-width="1.3"/><rect x="67.5" y="4.6" width="18" height="12" rx="2" fill="#606060" stroke="#000" stroke-width="1.3"/><path d="M10.2 8.2H16V13.5H12L11 14.6V13.5H10.2Z" fill="#000"/><rect x="11.8" y="9.6" width="2.6" height="2.4" fill="#fff"/><rect x="32.3" y="8.3" width="4.2" height="4.8" fill="none" stroke="#000" stroke-width="1.1"/><path d="M33 12.5L35.5 9.5" stroke="#000" stroke-width="0.8"/><rect x="51.8" y="8.1" width="1.2" height="1.2" fill="#000"/><rect x="57.1" y="8.1" width="1.2" height="1.2" fill="#000"/><rect x="51.8" y="12.6" width="1.2" height="1.2" fill="#000"/><rect x="57.1" y="12.6" width="1.2" height="1.2" fill="#000"/><path d="M73.3 13H78.3M75.8 9V13" stroke="#000" stroke-width="1.1"/></svg>
<svg class="ab" style="left:797px;top:324.3px" width="40" height="12" viewBox="0 0 40 12"><path d="M1.2 8.2L4.6 4.8" stroke="#000" stroke-width="2.2"/><path d="M2.6 1.6H7V6Z" fill="#000"/><circle cx="1.8" cy="7.6" r="1.2" fill="#000"/><rect x="13.2" y="1" width="7" height="6.8" fill="none" stroke="#000" stroke-width="1.4"/><path d="M12.5 1.6H21" stroke="#000" stroke-width="1.6"/><path d="M26.3 0.8L33.8 8M33.8 0.8L26.3 8" stroke="#000" stroke-width="1.6"/></svg>
<div class="ab" style="left:521px;top:83px;width:2px;height:468px;background:#d8d8d8"></div>
<div class="ab" style="left:208px;top:316px;width:630px;height:2px;background:#d4d4d4"></div>
<div class="ab" style="left:838px;top:63px;width:2px;height:488px;background:#d8d8d8"></div>
<div class="ab" style="left:946px;top:64px;width:51px;height:20px;background:#d2d2d2;border-top:1px solid #fafafa;border-left:1px solid #fafafa;border-right:1px solid #9a9a9a"></div>
<svg class="ab" style="left:956px;top:70px" width="40" height="12" viewBox="0 0 40 12"><path d="M1.2 8.2L4.6 4.8" stroke="#000" stroke-width="2.2"/><path d="M2.6 1.6H7V6Z" fill="#000"/><circle cx="1.8" cy="7.6" r="1.2" fill="#000"/><rect x="13.2" y="1" width="7" height="6.8" fill="none" stroke="#000" stroke-width="1.4"/><path d="M12.5 1.6H21" stroke="#000" stroke-width="1.6"/><path d="M26.3 0.8L33.8 8M33.8 0.8L26.3 8" stroke="#000" stroke-width="1.6"/></svg>
<div class="ab" style="left:840px;top:83px;width:157px;height:20px;background:#dcdcdc"></div>
<div class="t" style="left:840.5px;top:88.76px;font-size:12px;font-weight:bold;color:#000018;">Modeling</div>
<svg class="ab" style="left:957.7px;top:89.3px" width="40" height="12" viewBox="0 0 40 12"><path d="M1.2 8.2L4.6 4.8" stroke="#000" stroke-width="2.2"/><path d="M2.6 1.6H7V6Z" fill="#000"/><circle cx="1.8" cy="7.6" r="1.2" fill="#000"/><rect x="13.2" y="1" width="7" height="6.8" fill="none" stroke="#000" stroke-width="1.4"/><path d="M12.5 1.6H21" stroke="#000" stroke-width="1.6"/><path d="M26.3 0.8L33.8 8M33.8 0.8L26.3 8" stroke="#000" stroke-width="1.6"/></svg>
<div class="ab" style="left:996px;top:63px;width:1px;height:488px;background:#9c9c9c"></div>
<div class="ab" style="left:997px;top:63px;width:1px;height:488px;background:#c0c0c0"></div>
<div class="ab" style="left:840px;top:103px;width:156px;height:447px;background:#d0d0d0"></div>
<div class="ab" style="left:840px;top:103px;width:156px;height:22px;background:linear-gradient(#fbfbfb,#e6e6e6);border-top:1px solid #9c9c9c;border-radius:4px 4px 0 0"></div>
<svg class="ab" style="left:846px;top:113px" width="8" height="8"><path d="M0 0h7l-3.5 6z" fill="#000"/></svg>
<div class="t" style="left:859px;top:110.78px;font-size:12.5px;color:#0a0a20;">Selection</div>
<div class="ab" style="left:841px;top:125px;width:155px;height:88px;background:#d3d3d3"></div>
<div class="t" style="left:848px;top:131.07px;font-size:12.5px;color:#0a0a20;">Vertices:</div>
<div class="t" style="left:901.5px;width:67px;text-align:right;top:131.07px;font-size:12.5px;color:#0a0a20">2179</div>
<div class="t" style="left:848px;top:147.07px;font-size:12.5px;color:#0a0a20;">Nodes:</div>
<div class="t" style="left:901.5px;width:67px;text-align:right;top:147.07px;font-size:12.5px;color:#0a0a20">81</div>
<div class="t" style="left:848px;top:163.07px;font-size:12.5px;color:#0a0a20;">Camera Nodes:</div>
<div class="t" style="left:901.5px;width:67px;text-align:right;top:163.07px;font-size:12.5px;color:#0a0a20">2</div>
<div class="t" style="left:848px;top:178.97px;font-size:12.5px;color:#0a0a20;">Center:</div>
<div class="ab" style="left:841px;top:190px;width:154px;height:20px;overflow:hidden"><div class="t" style="left:7px;top:5px;font-size:12.5px;color:#0a0a20">{ -13.265524, -32.28079, 27.1}</div></div>
<div class="ab" style="left:840px;top:213px;width:156px;height:1px;background:#7e7e7e"></div>
<div class="ab" style="left:840px;top:214px;width:156px;height:1px;background:#f0f0f0"></div>
<div class="ab" style="left:840px;top:215px;width:156px;height:20px;background:linear-gradient(#fbfbfb,#e6e6e6);border-top:1px solid #9c9c9c;border-radius:4px 4px 0 0"></div>
<svg class="ab" style="left:846px;top:225px" width="8" height="8"><path d="M0 0h7l-3.5 6z" fill="#000"/></svg>
<div class="t" style="left:859px;top:221.18px;font-size:12.5px;color:#0a0a20;">Transform</div>
<div class="ab" style="left:841px;top:235px;width:155px;height:207px;background:#d0d0d0"></div>
<div class="t" style="left:850px;top:248.88px;font-size:12.5px;color:#0a0a20;letter-spacing:-0.55px">Move X:</div>
<div class="ab" style="left:891px;top:243px;width:89px;height:22px;background:#fff;border:1px solid #8a8a8a;border-right:none"></div>
<div class="t" style="left:966px;top:248.88px;font-size:12.5px;color:#0a0a20;">0</div>
<div class="ab" style="left:980px;top:243px;width:14px;height:22px;background:linear-gradient(#f4f4f4,#d0d0d0);border:1px solid #8a8a8a"></div>
<svg class="ab" style="left:980px;top:243px" width="14" height="22"><path d="M4 8.5h6l-3-3.5z M4 14h6l-3 3.5z" fill="#000"/><path d="M1 11h12" stroke="#9a9a9a"/></svg>
<div class="t" style="left:850px;top:270.88px;font-size:12.5px;color:#0a0a20;letter-spacing:-0.55px">Move Y:</div>
<div class="ab" style="left:891px;top:265px;width:89px;height:22px;background:#fff;border:1px solid #8a8a8a;border-right:none"></div>
<div class="t" style="left:966px;top:270.88px;font-size:12.5px;color:#0a0a20;">0</div>
<div class="ab" style="left:980px;top:265px;width:14px;height:22px;background:linear-gradient(#f4f4f4,#d0d0d0);border:1px solid #8a8a8a"></div>
<svg class="ab" style="left:980px;top:265px" width="14" height="22"><path d="M4 8.5h6l-3-3.5z M4 14h6l-3 3.5z" fill="#000"/><path d="M1 11h12" stroke="#9a9a9a"/></svg>
<div class="t" style="left:850px;top:292.88px;font-size:12.5px;color:#0a0a20;letter-spacing:-0.55px">Move Z:</div>
<div class="ab" style="left:891px;top:287px;width:89px;height:22px;background:#fff;border:1px solid #8a8a8a;border-right:none"></div>
<div class="t" style="left:966px;top:292.88px;font-size:12.5px;color:#0a0a20;">0</div>
<div class="ab" style="left:980px;top:287px;width:14px;height:22px;background:linear-gradient(#f4f4f4,#d0d0d0);border:1px solid #8a8a8a"></div>
<svg class="ab" style="left:980px;top:287px" width="14" height="22"><path d="M4 8.5h6l-3-3.5z M4 14h6l-3 3.5z" fill="#000"/><path d="M1 11h12" stroke="#9a9a9a"/></svg>
<div class="ab" style="left:850px;top:312px;width:52px;height:20px;border:1px solid #8c8c8c;border-radius:10.0px;background:linear-gradient(#fdfdfd,#d6d6d6 60%,#e8e8e8)"></div>
<div class="t" style="left:850px;width:52px;text-align:center;top:315.7px;font-size:12.5px;color:#0a0a20">Move</div>
<div class="t" style="left:850px;top:347.88px;font-size:12.5px;color:#0a0a20;letter-spacing:-0.55px">New X:</div>
<div class="ab" style="left:888px;top:342px;width:90px;height:22px;background:#fff;border:1px solid #8a8a8a;border-right:none"></div>
<div class="t" style="left:964px;top:347.88px;font-size:12.5px;color:#0a0a20;">0</div>
<div class="ab" style="left:978px;top:342px;width:14px;height:22px;background:linear-gradient(#f4f4f4,#d0d0d0);border:1px solid #8a8a8a"></div>
<svg class="ab" style="left:978px;top:342px" width="14" height="22"><path d="M4 8.5h6l-3-3.5z M4 14h6l-3 3.5z" fill="#000"/><path d="M1 11h12" stroke="#9a9a9a"/></svg>
<div class="t" style="left:850px;top:369.88px;font-size:12.5px;color:#0a0a20;letter-spacing:-0.55px">New Y:</div>
<div class="ab" style="left:888px;top:364px;width:90px;height:22px;background:#fff;border:1px solid #8a8a8a;border-right:none"></div>
<div class="t" style="left:964px;top:369.88px;font-size:12.5px;color:#0a0a20;">0</div>
<div class="ab" style="left:978px;top:364px;width:14px;height:22px;background:linear-gradient(#f4f4f4,#d0d0d0);border:1px solid #8a8a8a"></div>
<svg class="ab" style="left:978px;top:364px" width="14" height="22"><path d="M4 8.5h6l-3-3.5z M4 14h6l-3 3.5z" fill="#000"/><path d="M1 11h12" stroke="#9a9a9a"/></svg>
<div class="t" style="left:850px;top:391.88px;font-size:12.5px;color:#0a0a20;letter-spacing:-0.55px">New Z:</div>
<div class="ab" style="left:888px;top:386px;width:90px;height:22px;background:#fff;border:1px solid #8a8a8a;border-right:none"></div>
<div class="t" style="left:964px;top:391.88px;font-size:12.5px;color:#0a0a20;">0</div>
<div class="ab" style="left:978px;top:386px;width:14px;height:22px;background:linear-gradient(#f4f4f4,#d0d0d0);border:1px solid #8a8a8a"></div>
<svg class="ab" style="left:978px;top:386px" width="14" height="22"><path d="M4 8.5h6l-3-3.5z M4 14h6l-3 3.5z" fill="#000"/><path d="M1 11h12" stroke="#9a9a9a"/></svg>
<div class="ab" style="left:850px;top:411px;width:65px;height:20px;border:1px solid #8c8c8c;border-radius:10.0px;background:linear-gradient(#fdfdfd,#d6d6d6 60%,#e8e8e8)"></div>
<div class="t" style="left:850px;width:65px;text-align:center;top:414.7px;font-size:12.5px;color:#0a0a20">Move to</div>
<div class="ab" style="left:919px;top:411px;width:38px;height:20px;border:1px solid #8c8c8c;border-radius:10.0px;background:linear-gradient(#fdfdfd,#d6d6d6 60%,#e8e8e8)"></div>
<div class="t" style="left:919px;width:38px;text-align:center;top:414.7px;font-size:12.5px;color:#0a0a20">&raquo;&laquo;</div>
<div class="ab" style="left:840px;top:442px;width:156px;height:1px;background:#7e7e7e"></div>
<div class="ab" style="left:841px;top:443px;width:155px;height:21px;background:#d4d4d4"></div>
<div class="ab" style="left:842px;top:444px;width:126px;height:19px;border:1px solid #8c8c8c;border-radius:9.5px;background:linear-gradient(#fdfdfd,#d6d6d6 60%,#e8e8e8)"></div>
<div class="t" style="left:842px;width:126px;text-align:center;top:447.2px;font-size:12.5px;color:#0a0a20">show popup menu</div>
<div class="ab" style="left:840px;top:464px;width:156px;height:20px;background:linear-gradient(#f6f6f6,#ebebeb)"></div>
<svg class="ab" style="left:846px;top:473px" width="8" height="8"><path d="M0 0h7l-3.5 6z" fill="#000"/></svg>
<div class="t" style="left:859px;top:469.38px;font-size:12.5px;color:#0a0a20;">Add</div>
<div class="ab" style="left:841px;top:484px;width:155px;height:65px;background:#d0d0d0"></div>
<div class="ab" style="left:845px;top:492px;width:139px;height:60px;border:1px solid #9a9a9a;border-bottom:none"></div>
<div class="ab" style="left:849px;top:486px;width:36px;height:14px;background:#d0d0d0"></div>
<div class="t" style="left:851px;top:486.88px;font-size:12.5px;color:#0a0a20;">Draw</div>
<div class="ab" style="left:849px;top:503px;width:56px;height:19px;border:1px solid #8c8c8c;border-radius:9.5px;background:linear-gradient(#fdfdfd,#d6d6d6 60%,#e8e8e8)"></div>
<div class="t" style="left:849px;width:56px;text-align:center;top:506.2px;font-size:12.5px;color:#0a0a20">Vertex</div>
<div class="ab" style="left:849px;top:523px;width:132px;height:19px;border:1px solid #8c8c8c;border-radius:9.5px;background:linear-gradient(#fdfdfd,#d6d6d6 60%,#e8e8e8)"></div>
<div class="t" style="left:849px;width:132px;text-align:center;top:526.2px;font-size:12.5px;color:#0a0a20">Face from Selection</div>
<div class="ab" style="left:849px;top:543px;width:50px;height:19px;border:1px solid #8c8c8c;border-radius:9.5px;background:linear-gradient(#fdfdfd,#d6d6d6 60%,#e8e8e8)"></div>
<div class="t" style="left:849px;width:50px;text-align:center;top:546.2px;font-size:12.5px;color:#0a0a20">Face</div>
<div class="ab" style="left:840px;top:549px;width:158px;height:3px;background:#c8c8c8"></div>
<div class="ab" style="left:840px;top:549px;width:157px;height:1px;background:#8a8a8a"></div>
<div class="ab" style="left:8px;top:551px;width:990px;height:1px;background:#c4c4c4"></div>
<div class="ab" style="left:9px;top:552px;width:988px;height:21px;background:#dedede;border-top:1px solid #f0f0f0"></div>
<div class="t" style="left:11px;top:557.76px;font-size:12px;font-weight:bold;color:#000018;">Timeline</div>
<svg class="ab" style="left:957.5px;top:559.5px" width="40" height="12" viewBox="0 0 40 12"><path d="M1.2 8.2L4.6 4.8" stroke="#000" stroke-width="2.2"/><path d="M2.6 1.6H7V6Z" fill="#000"/><circle cx="1.8" cy="7.6" r="1.2" fill="#000"/><rect x="13.2" y="1" width="7" height="6.8" fill="none" stroke="#000" stroke-width="1.4"/><path d="M12.5 1.6H21" stroke="#000" stroke-width="1.6"/><path d="M26.3 0.8L33.8 8M33.8 0.8L26.3 8" stroke="#000" stroke-width="1.6"/></svg>
<div class="ab" style="left:9px;top:573px;width:111px;height:47px;background:#cdcdcd"></div>
<div class="ab" style="left:119px;top:573px;width:876px;height:48px;background:#d8d8d8;border:1px solid #6a6a6a;border-right-color:#9a9a9a"></div>
<div class="ab" style="left:996px;top:552px;width:1px;height:70px;background:#9c9c9c"></div>
<div class="ab" style="left:42px;top:25px;width:234px;height:458px;background:#e8e8e8;border:1px solid #858585"></div>
<div class="ab" style="left:42px;top:25px;width:18px;height:458px;background:#cbd0aa;border-left:1px solid #858585;border-bottom:1px solid #858585;border-right:1px solid #8a8a8a"></div>
<div class="ab" style="left:43px;top:25px;width:1px;height:457px;background:#dfe3c6"></div>
<div class="ab" style="left:42px;top:4px;width:33px;height:22px;background:#cbd0aa;border:1px solid #858585;border-bottom:none"></div>
<div class="ab" style="left:43px;top:5px;width:31px;height:1px;background:#e4e8cc"></div>
<div class="ab" style="left:43px;top:5px;width:1px;height:21px;background:#e4e8cc"></div>
<div class="t" style="left:48px;top:9.02px;font-size:12.7px;color:#0a0a1e;"><u>E</u>dit</div>
<div class="ab" style="left:60px;top:26px;width:215px;height:1px;background:#f8f8f8"></div>
<div class="t" style="left:46px;top:479.5px;font-size:12px;font-weight:bold;color:#fff;-webkit-text-stroke:0.35px #fff;transform:rotate(-90deg);transform-origin:0 0">RMS</div>
<div class="ab" style="left:60px;top:72px;width:215px;height:21px;background:#cbd0aa;border-top:1px solid #8c8c8c;border-bottom:1px solid #8c8c8c"></div>
<div class="ab" style="left:60px;top:73px;width:215px;height:1px;background:#e2e6c8"></div>
<div class="ab" style="left:60px;top:70px;width:215px;height:1px;background:#9a9a9a"></div>
<div class="ab" style="left:60px;top:71px;width:215px;height:1px;background:#fafafa"></div>
<div class="ab" style="left:60px;top:136px;width:215px;height:1px;background:#9a9a9a"></div>
<div class="ab" style="left:60px;top:137px;width:215px;height:1px;background:#fafafa"></div>
<div class="ab" style="left:60px;top:223px;width:215px;height:1px;background:#9a9a9a"></div>
<div class="ab" style="left:60px;top:224px;width:215px;height:1px;background:#fafafa"></div>
<div class="ab" style="left:60px;top:268px;width:215px;height:1px;background:#9a9a9a"></div>
<div class="ab" style="left:60px;top:269px;width:215px;height:1px;background:#fafafa"></div>
<div class="ab" style="left:60px;top:438px;width:215px;height:1px;background:#9a9a9a"></div>
<div class="ab" style="left:60px;top:439px;width:215px;height:1px;background:#fafafa"></div>
<div class="ab" style="left:60px;top:460px;width:215px;height:1px;background:#9a9a9a"></div>
<div class="ab" style="left:60px;top:461px;width:215px;height:1px;background:#fafafa"></div>
<div class="t" style="left:65.5px;top:32.17px;font-size:12.5px;color:#0a0a20;">Undo select</div>
<div class="t" style="left:201px;top:33.29px;font-size:10.4px;color:#0a0a20;">Ctrl-Z</div>
<div class="t" style="left:65.5px;top:53.17px;font-size:12.5px;color:#a6a6a6;">Can't redo</div>
<div class="t" style="left:201px;top:54.29px;font-size:10.4px;color:#a6a6a6;">Ctrl-Y</div>
<div class="t" style="left:65.5px;top:77.58px;font-size:12.5px;color:#0a0a20;"><u>O</u>ptimize</div>
<div class="t" style="left:65.5px;top:98.17px;font-size:12.5px;color:#0a0a20;">Recalculate Normals</div>
<div class="t" style="left:201px;top:99.29px;font-size:10.4px;color:#0a0a20;">Ctrl+Shift-N</div>
<div class="t" style="left:65.5px;top:118.97px;font-size:12.5px;color:#0a0a20;">Recalculate Extents</div>
<div class="t" style="left:201px;top:120.09px;font-size:10.4px;color:#0a0a20;">Ctrl+Shift-E</div>
<div class="t" style="left:65.5px;top:143.38px;font-size:12.5px;color:#0a0a20;">Cut</div>
<div class="t" style="left:201px;top:144.49px;font-size:10.4px;color:#0a0a20;">Ctrl-X</div>
<div class="t" style="left:65.5px;top:164.38px;font-size:12.5px;color:#0a0a20;">Copy</div>
<div class="t" style="left:201px;top:165.49px;font-size:10.4px;color:#0a0a20;">Ctrl-C</div>
<div class="t" style="left:65.5px;top:185.38px;font-size:12.5px;color:#0a0a20;">Paste</div>
<div class="t" style="left:201px;top:186.49px;font-size:10.4px;color:#0a0a20;">Ctrl-V</div>
<div class="t" style="left:65.5px;top:206.18px;font-size:12.5px;color:#0a0a20;">Duplicate</div>
<div class="t" style="left:201px;top:207.29px;font-size:10.4px;color:#0a0a20;">Ctrl-D</div>
<div class="t" style="left:65.5px;top:230.38px;font-size:12.5px;color:#0a0a20;">Snap Vertices</div>
<div class="t" style="left:201px;top:231.49px;font-size:10.4px;color:#0a0a20;">Ctrl+Shift-W</div>
<div class="t" style="left:65.5px;top:251.38px;font-size:12.5px;color:#0a0a20;">Snap Normals</div>
<div class="t" style="left:201px;top:252.49px;font-size:10.4px;color:#0a0a20;">Ctrl+Shift-L</div>
<div class="t" style="left:65.5px;top:275.18px;font-size:12.5px;color:#0a0a20;">Select All</div>
<div class="t" style="left:201px;top:276.29px;font-size:10.4px;color:#0a0a20;">Ctrl-A</div>
<div class="t" style="left:65.5px;top:295.98px;font-size:12.5px;color:#0a0a20;">Invert Selection</div>
<div class="t" style="left:201px;top:297.09px;font-size:10.4px;color:#0a0a20;">Ctrl-I</div>
<div class="t" style="left:65.5px;top:316.98px;font-size:12.5px;color:#0a0a20;">Expand Selection</div>
<div class="t" style="left:201px;top:318.09px;font-size:10.4px;color:#0a0a20;">Ctrl-E</div>
<div class="t" style="left:65.5px;top:337.98px;font-size:12.5px;color:#0a0a20;">Shrink Selection</div>
<div class="t" style="left:201px;top:339.09px;font-size:10.4px;color:#0a0a20;">Ctrl+Shift-E</div>
<div class="t" style="left:65.5px;top:358.88px;font-size:12.5px;color:#0a0a20;">Select Linked Geometry</div>
<div class="t" style="left:201px;top:359.99px;font-size:10.4px;color:#0a0a20;">Ctrl-L</div>
<div class="t" style="left:65.5px;top:379.77px;font-size:12.5px;color:#0a0a20;">Select Node Geometry</div>
<div class="t" style="left:65.5px;top:400.57px;font-size:12.5px;color:#0a0a20;">Select Geometry Nodes</div>
<div class="t" style="left:65.5px;top:421.88px;font-size:12.5px;color:#0a0a20;">Deselect Random</div>
<div class="t" style="left:65.5px;top:443.57px;font-size:12.5px;color:#0a0a20;">Delete</div>
<div class="t" style="left:201px;top:444.69px;font-size:10.4px;color:#0a0a20;">Delete</div>
<div class="t" style="left:65.5px;top:466.38px;font-size:12.5px;color:#0a0a20;"><u>P</u>references Window</div>
<svg class="ab" style="left:262px;top:76px" width="8" height="11"><path d="M1 0.5v10l6-5z" fill="#000"/></svg>
<div class="ab" style="left:271px;top:69px;width:200px;height:192px;background:#e8e8e8;border:1px solid #858585"></div>
<div class="ab" style="left:271px;top:69px;width:18px;height:192px;background:#cbd0aa;border:1px solid #858585;border-right:1px solid #8a8a8a"></div>
<div class="ab" style="left:272px;top:70px;width:1px;height:190px;background:#dfe3c6"></div>
<div class="ab" style="left:289px;top:70px;width:181px;height:1px;background:#f8f8f8"></div>
<div class="t" style="left:275px;top:258px;font-size:12px;font-weight:bold;color:#fff;-webkit-text-stroke:0.35px #fff;transform:rotate(-90deg);transform-origin:0 0">RMS</div>
<div class="ab" style="left:289px;top:92px;width:181px;height:21px;background:#cbd0aa;border-top:1px solid #8c8c8c;border-bottom:1px solid #8c8c8c"></div>
<div class="ab" style="left:289px;top:93px;width:181px;height:1px;background:#e2e6c8"></div>
<div class="t" style="left:294.5px;top:76.27px;font-size:12.5px;color:#0a0a20;">Linearize Animations</div>
<div class="t" style="left:294.5px;top:97.27px;font-size:12.5px;color:#0a0a20;">Simplify <u>K</u>eyframes</div>
<div class="t" style="left:294.5px;top:118.27px;font-size:12.5px;color:#0a0a20;">Round <u>K</u>eyframes</div>
<div class="t" style="left:294.5px;top:139.28px;font-size:12.5px;color:#0a0a20;">Minimize Geosets</div>
<div class="t" style="left:294.5px;top:160.28px;font-size:12.5px;color:#0a0a20;">Simplify Selected Geometry</div>
<div class="t" style="left:294.5px;top:181.28px;font-size:12.5px;color:#0a0a20;"><u>S</u>ort Nodes</div>
<div class="t" style="left:294.5px;top:202.28px;font-size:12.5px;color:#0a0a20;">Remove Unused Nodes</div>
<div class="t" style="left:294.5px;top:223.28px;font-size:12.5px;color:#0a0a20;">Remove Loose Verts</div>
<div class="t" style="left:294.5px;top:244.28px;font-size:12.5px;color:#0a0a20;">Remove Material<u>s</u> Duplicates</div>
</body></html>
